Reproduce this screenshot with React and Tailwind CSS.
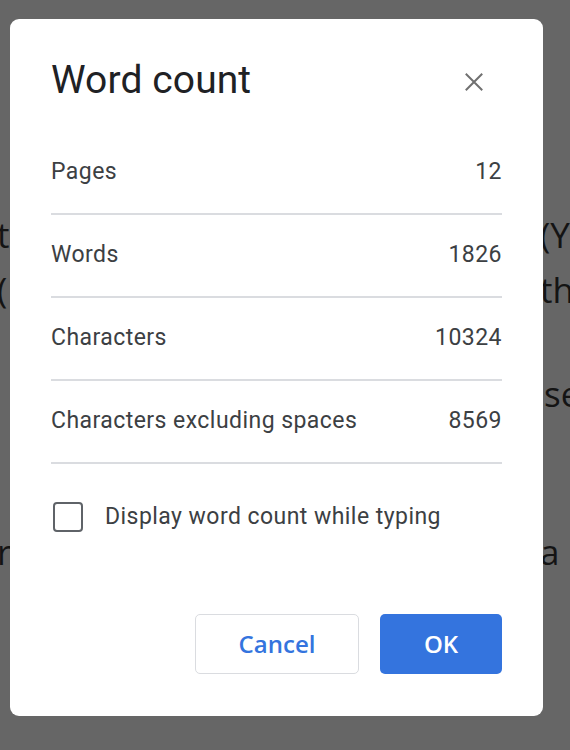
import { useState } from "react";

const rows = [
  { label: "Pages", value: "12" },
  { label: "Words", value: "1826" },
  { label: "Characters", value: "10324" },
  { label: "Characters excluding spaces", value: "8569" },
];

// document text peeking out behind the overlay
const docLines = [
  { left: "t", right: "(You", className: "" },
  { left: "(", right: "the", className: "" },
  { left: "", right: "see", className: "mt-[49px] [&>span:last-child]:pl-[4px]" },
  { left: "r", right: "a", className: "mt-[103px]" },
];

function CloseIcon() {
  return (
    <svg width="18" height="18" viewBox="0 0 18 18" fill="none">
      <path d="M1.5 1.5 L16.5 16.5 M16.5 1.5 L1.5 16.5" stroke="#707070" strokeWidth="2" strokeLinecap="square" />
    </svg>
  );
}

export default function App() {
  const [showWhileTyping, setShowWhileTyping] = useState(false);

  return (
    <div className="relative w-[570px] h-[750px] overflow-hidden bg-[#666666]">
      <div
        className="pt-[207px] text-[35px] text-[#141414]"
        style={{ fontFamily: '"Open Sans", sans-serif' }}
      >
        {docLines.map((line, i) => (
          <div key={i} className={`flex h-[55px] leading-[55px] ${line.className}`}>
            <span className="w-[543px] shrink-0 -ml-[3px] whitespace-nowrap">{line.left}</span>
            <span className="flex-1 overflow-hidden whitespace-nowrap">{line.right}</span>
          </div>
        ))}
      </div>

      <div
        className="absolute left-[10px] top-[19px] w-[533px] bg-white rounded-[9px] px-[41px] pt-[39px] pb-[42px]"
        style={{ fontFamily: "Roboto, sans-serif" }}
      >
        <div className="flex items-center justify-between mb-[30px]">
          <h1 className="text-[39px] leading-[44px] text-[#202124] font-normal tracking-[0.1px]">Word count</h1>
          <button className="mr-[19px] mt-[4px] flex items-center justify-center">
            <CloseIcon />
          </button>
        </div>

        {rows.map((row) => (
          <div
            key={row.label}
            className="flex justify-between pt-[26px] pb-[27px] border-b-2 border-[#dadce0] text-[23px] leading-[28px] text-[#3c4043] tracking-[0.45px]"
          >
            <span>{row.label}</span>
            <span>{row.value}</span>
          </div>
        ))}

        <label className="flex items-center gap-[22px] mt-[38px] ml-[2px] cursor-pointer">
          <button
            onClick={() => setShowWhileTyping(!showWhileTyping)}
            className="w-[30px] h-[30px] border-[2.5px] border-[#5f6368] rounded-[4px] bg-white"
          />
          <span className="text-[23px] leading-[28px] text-[#3c4043] tracking-[0.45px]">
            Display word count while typing
          </span>
        </label>

        <div
          className="flex justify-end gap-[21px] mt-[82px]"
          style={{ fontFamily: '"Open Sans", sans-serif' }}
        >
          <button className="w-[164px] h-[60px] rounded-[5px] border-[1.5px] border-[#dadce0] bg-white text-[#3474de] text-[24px] font-semibold">
            Cancel
          </button>
          <button className="w-[122px] h-[60px] rounded-[5px] bg-[#3474de] text-white text-[24px] font-semibold">
            OK
          </button>
        </div>
      </div>
    </div>
  );
}
